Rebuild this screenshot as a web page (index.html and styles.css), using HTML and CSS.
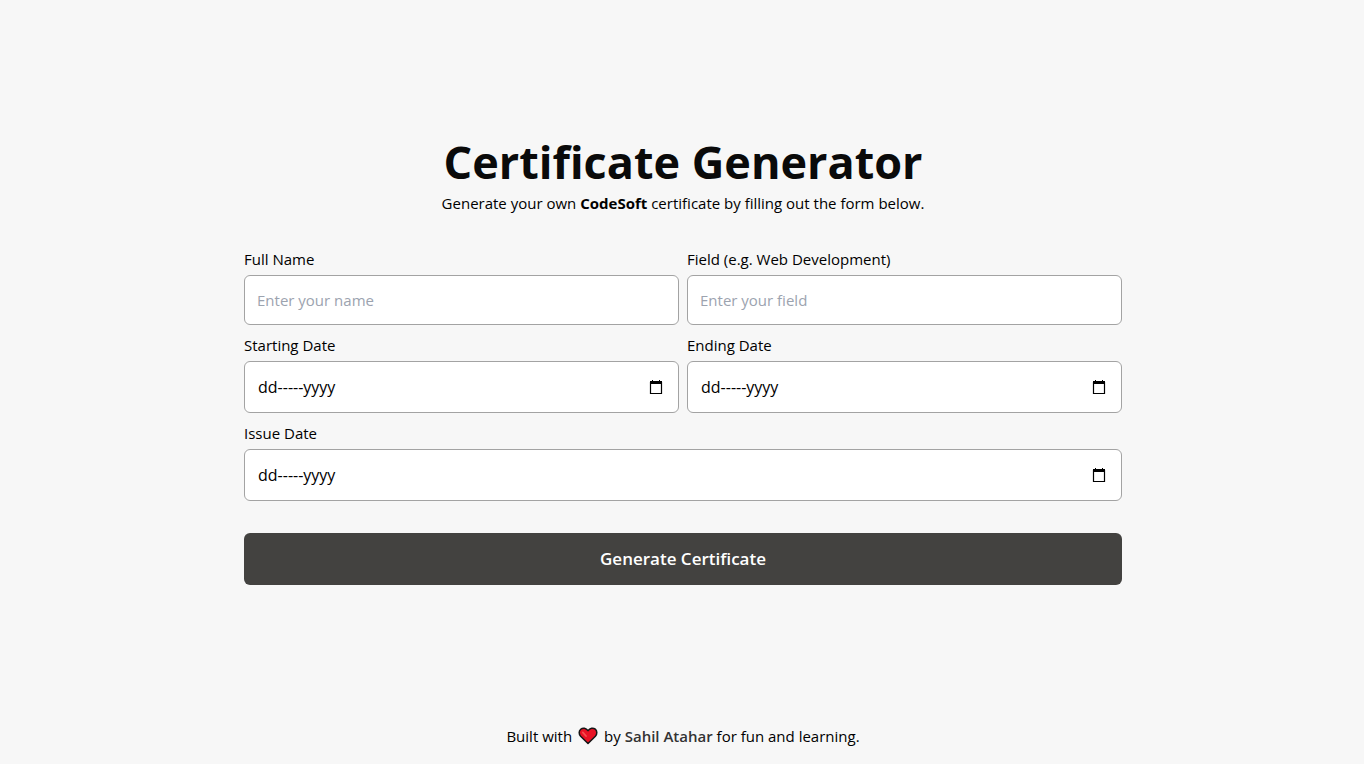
FILE: index.html
```html
<!DOCTYPE html>
<html lang="en">
<head>
<meta charset="utf-8">
<meta name="viewport" content="width=device-width, initial-scale=1">
<title>Certificate Generator</title>
<link rel="stylesheet" href="styles.css">
</head>
<body class="page">
<main class="main">
  <h1 class="title">Certificate Generator</h1>
  <p class="subtitle">Generate your own <strong>CodeSoft</strong> certificate by filling out the form below.</p>
  <form class="form">
    <div class="field">
      <label class="label" for="name">Full Name</label>
      <input class="input" id="name" type="text" placeholder="Enter your name">
    </div>
    <div class="field">
      <label class="label" for="area">Field (e.g. Web Development)</label>
      <input class="input" id="area" type="text" placeholder="Enter your field">
    </div>
    <div class="field">
      <label class="label" for="start">Starting Date</label>
      <div class="date">
        <input class="date-input" id="start" type="text" placeholder="dd-----yyyy">
        <button class="picker" type="button" aria-label="Choose starting date"><svg class="calendar" viewBox="0 0 14 15"><path d="M3 0h1v2H3zM10 0h1v2h-1zM1 1h12v3H1z"/><path d="M1.5 2v11.5h11V2" fill="none" stroke="#000" stroke-width="1.2"/></svg></button>
      </div>
    </div>
    <div class="field">
      <label class="label" for="end">Ending Date</label>
      <div class="date">
        <input class="date-input" id="end" type="text" placeholder="dd-----yyyy">
        <button class="picker" type="button" aria-label="Choose ending date"><svg class="calendar" viewBox="0 0 14 15"><path d="M3 0h1v2H3zM10 0h1v2h-1zM1 1h12v3H1z"/><path d="M1.5 2v11.5h11V2" fill="none" stroke="#000" stroke-width="1.2"/></svg></button>
      </div>
    </div>
    <div class="field field-wide">
      <label class="label" for="issue">Issue Date</label>
      <div class="date">
        <input class="date-input" id="issue" type="text" placeholder="dd-----yyyy">
        <button class="picker" type="button" aria-label="Choose issue date"><svg class="calendar" viewBox="0 0 14 15"><path d="M3 0h1v2H3zM10 0h1v2h-1zM1 1h12v3H1z"/><path d="M1.5 2v11.5h11V2" fill="none" stroke="#000" stroke-width="1.2"/></svg></button>
      </div>
    </div>
    <button class="submit" type="submit">Generate Certificate</button>
  </form>
</main>
<footer class="footer">
  <span>Built with</span>
  <svg class="heart" viewBox="0 0 20 18" role="img" aria-label="love"><path d="M10 16.5 2.6 9.2C0.6 7 0.8 3.8 2.7 2.2 4.9 0.4 8 0.9 10 3.6 12 0.9 15.1 0.4 17.3 2.2 19.2 3.8 19.4 7 17.4 9.2Z" fill="#e81224" stroke="#161616" stroke-width="1.5" stroke-linejoin="round"/><path d="M4.8 5.4 8 9" stroke="#f4504f" stroke-width="1.8" stroke-linecap="round"/></svg>
  <span>by <a class="author" href="#">Sahil Atahar</a> for fun and learning.</span>
</footer>
</body>
</html>
```
FILE: styles.css
```css
* {
  box-sizing: border-box;
}

.page {
  display: flex;
  flex-direction: column;
  min-height: 100vh;
  margin: 0;
  padding-left: 2px;
  background: #f7f7f7;
  color: #000;
  font-family: "Segoe UI", "Open Sans", "Noto Sans", sans-serif;
  font-size: 15px;
  line-height: 24px;
}

.main {
  flex: 1;
  display: flex;
  flex-direction: column;
  justify-content: center;
  width: 100%;
  max-width: 878px;
  margin: 0 auto;
  padding-bottom: 6px;
}

.title {
  margin: 0;
  color: #0a0a0a;
  font-size: 45px;
  font-weight: 700;
  line-height: 58px;
  text-align: center;
}

.subtitle {
  margin: 0 0 32px;
  text-align: center;
}

.form {
  display: grid;
  grid-template-columns: 1fr 1fr;
  gap: 8px;
}

.field {
  display: flex;
  flex-direction: column;
  gap: 4px;
}

.field-wide {
  grid-column: 1 / -1;
}

.input,
.date {
  width: 100%;
  border: 1px solid #a3a3a3;
  border-radius: 6px;
  background: #fff;
}

.input,
.date-input {
  color: #000;
  font: inherit;
}

.input {
  height: 50px;
  padding: 0 12px;
}

.input::placeholder {
  color: #9ca3af;
}

.date {
  display: flex;
  align-items: center;
  height: 52px;
  padding: 0 13px;
}

.date-input {
  flex: 1;
  min-width: 0;
  padding: 0;
  border: 0;
  background: transparent;
  font-size: 16px;
}

.date-input::placeholder {
  color: #000;
}

.picker {
  display: flex;
  padding: 2px;
  border: 0;
  background: transparent;
}

.calendar {
  width: 14px;
  height: 15px;
}

.submit {
  grid-column: 1 / -1;
  height: 52px;
  margin-top: 24px;
  border: 0;
  border-radius: 6px;
  background: #434240;
  color: #fff;
  font: inherit;
  font-size: 17px;
  font-weight: 600;
}

.footer {
  display: flex;
  justify-content: center;
  align-items: center;
  gap: 6px;
  padding-bottom: 16px;
}

.heart {
  width: 20px;
  height: 18px;
}

.author {
  color: #333;
  font-weight: 600;
  text-decoration: none;
}
```
